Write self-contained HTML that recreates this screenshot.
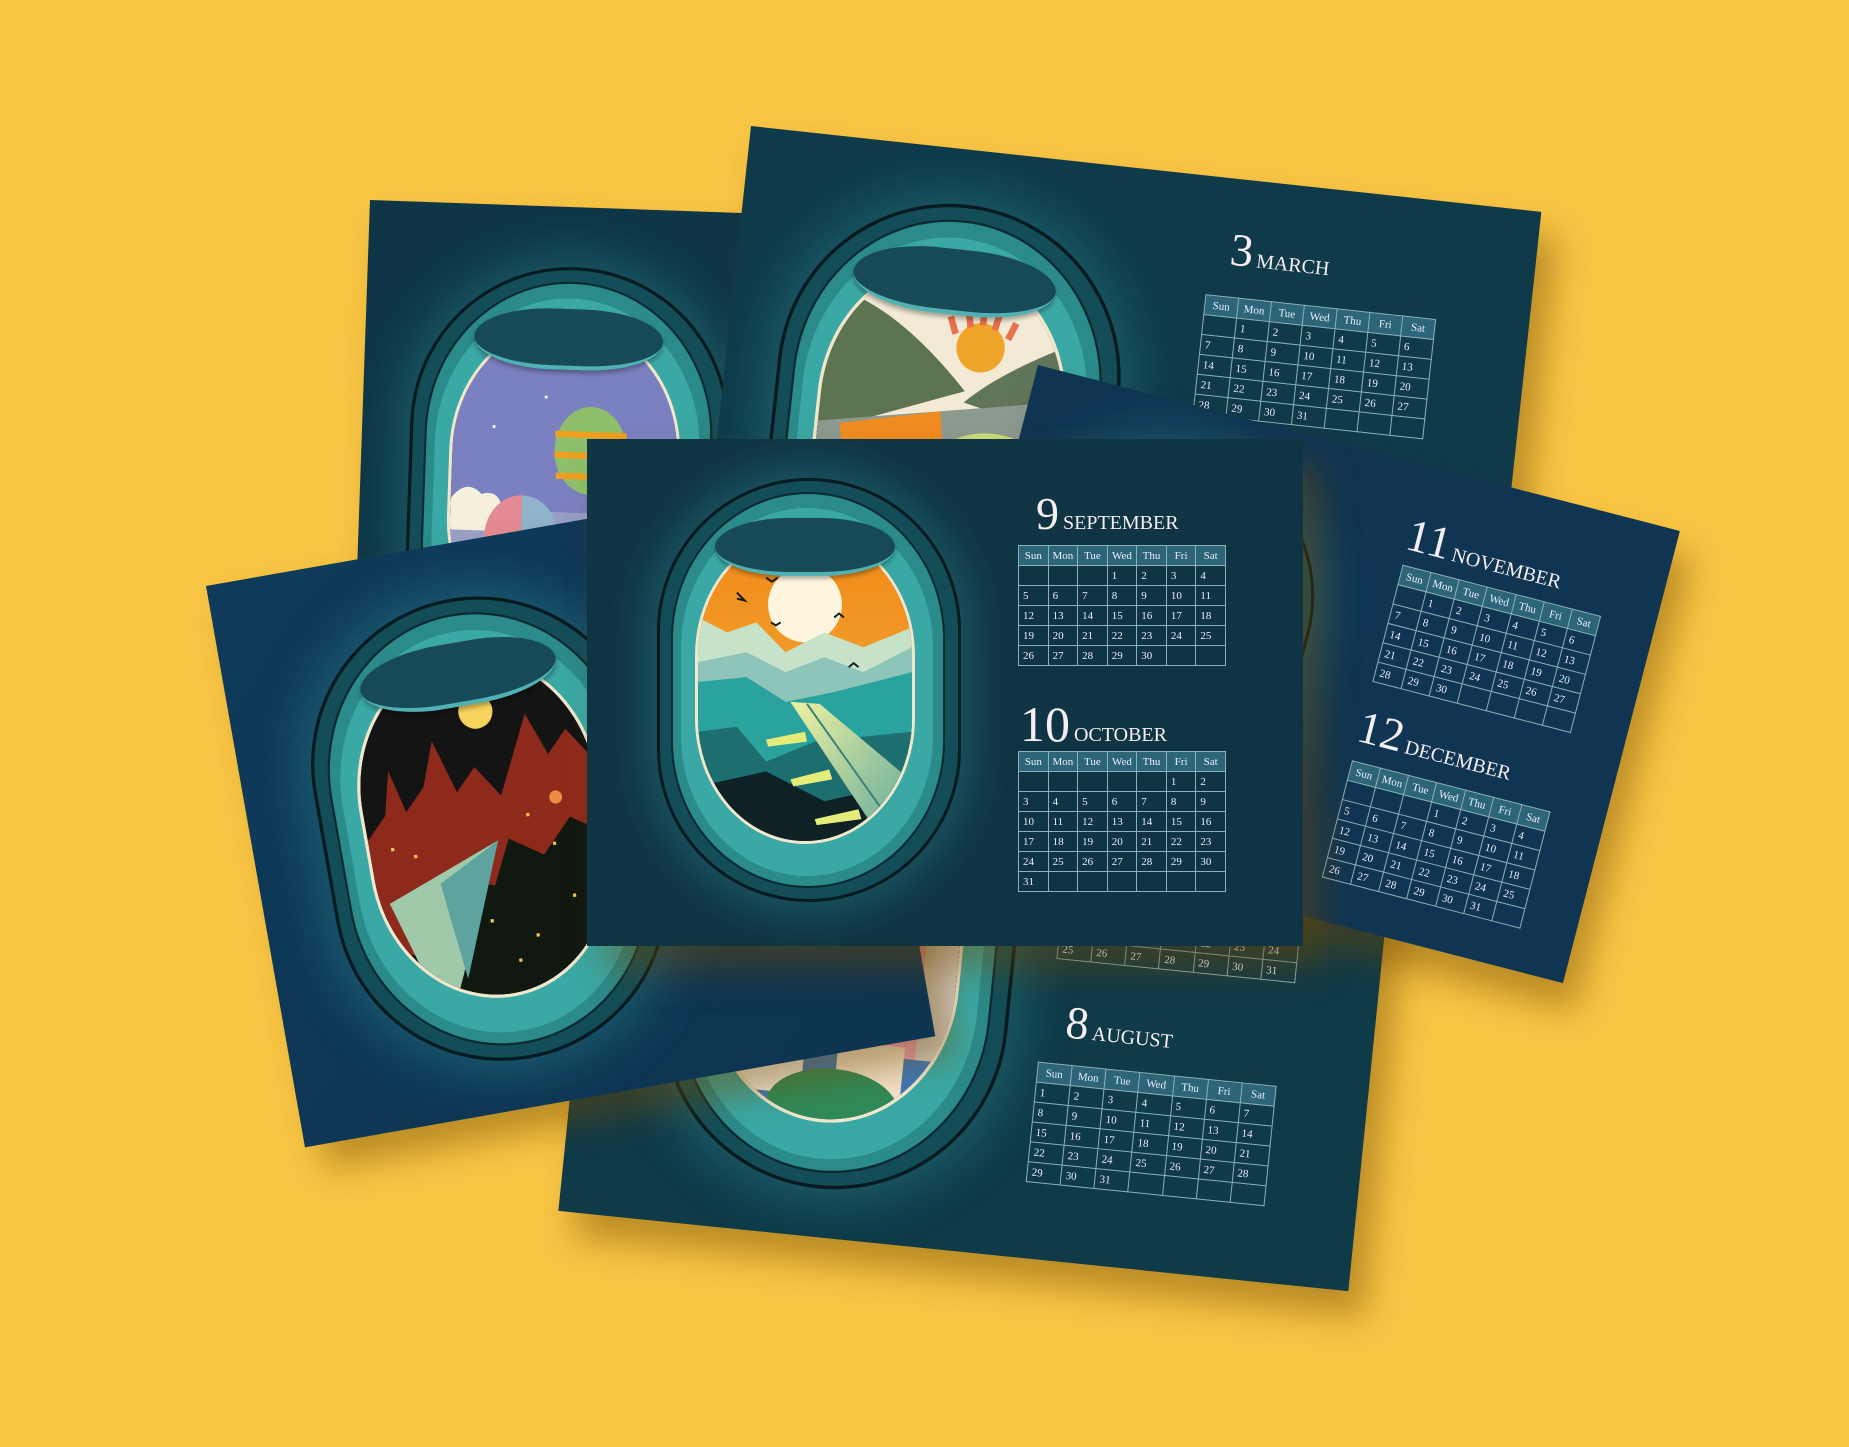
<!DOCTYPE html>
<html><head><meta charset="utf-8">
<style>
*{margin:0;padding:0;box-sizing:border-box}
html,body{width:1849px;height:1447px;overflow:hidden;background:#f9c544}
.card{position:absolute;overflow:hidden;box-shadow:18px 24px 34px rgba(110,70,0,.45)}
.win{position:absolute;width:304px;height:424px;transform-origin:0 0}
.w1{position:absolute;inset:0;border-radius:50%/36%;background:#134e58;border:3px solid #061a20;box-shadow:0 0 45px 12px rgba(60,180,180,.28)}
.w2{position:absolute;left:14px;right:16px;top:14px;bottom:14px;border-radius:50%/37%;background:#2b8a8a;border:2px solid #0b2a30}
.w3{position:absolute;left:24px;right:28px;top:30px;bottom:26px;border-radius:50%/38%;background:#3aa8a4}
.sc{position:absolute;left:38px;right:46px;top:52px;bottom:58px;border-radius:50%/40%;overflow:hidden;border:3px solid #f1e7cc;background:#222}
.sc svg{width:100%;height:100%;display:block}
.shade{position:absolute;left:58px;right:66px;top:40px;height:58px;border-radius:50%/60%;background:#174a56;border-bottom:4px solid #4fb1b3;box-shadow:0 3px 4px rgba(0,0,0,.3)}
.ttl{position:absolute;color:#f6eef0;font-family:"Liberation Serif",serif;white-space:nowrap;line-height:1}
.ttl b{font-weight:normal;font-size:46px}
.ttl span{font-size:20px;margin-left:4px}
table.cal{position:absolute;border-collapse:collapse;table-layout:fixed;font-family:"Liberation Serif",serif;color:#eef;font-size:11px}
table.cal td{border:1px solid #8fb0b7;height:20px;padding-left:4px;text-align:left}
table.cal tr:first-child td{background:#2c6577;text-align:center;padding:0}
</style></head><body>

<!-- balloon card -->
<div class="card" style="left:370px;top:200px;width:660px;height:560px;background:#0e3646;transform:rotate(2deg);transform-origin:0 0">
  <div class="win" style="left:48px;top:60px;transform:scale(1.05)">
    <div class="w1"></div><div class="w2"></div><div class="w3"></div>
    <div class="sc"><svg viewBox="0 0 220 310" preserveAspectRatio="none">
      <rect width="220" height="310" fill="#7b80c0"/><rect y="180" width="220" height="130" fill="#9aa0c8"/>
      <circle cx="40" cy="100" r="1.5" fill="#fff"/><circle cx="90" cy="70" r="1.5" fill="#fff"/><circle cx="180" cy="120" r="1.5" fill="#fff"/><circle cx="200" cy="150" r="1.5" fill="#fff"/>
      <path d="M0 170 q15-20 30-5 q15-5 20 10 l0 25 H0z" fill="#f4f0dc"/>
      <ellipse cx="135" cy="120" rx="35" ry="42" fill="#8fbf6a"/>
      <path d="M100 105 h70 M100 125 h70 M102 145 h66" stroke="#f0a020" stroke-width="6"/>
      <ellipse cx="70" cy="205" rx="36" ry="40" fill="#e48a94"/>
      <path d="M70 165 a36 40 0 0 1 0 80z" fill="#8fb4cc"/>
      <path d="M34 215 l72 0 l-10 10 l-10-10 l-10 10 l-10-10 l-10 10 l-10-10 l-10 10z" fill="#e6d070"/>
      <path d="M50 240 L62 275 h16 L90 240z" fill="#e48a94"/>
    </svg></div>
    <div class="shade"></div>
  </div>
</div>

<!-- March card -->
<div class="card" style="left:751px;top:126px;width:795px;height:560px;background:#0f3a4a;transform:rotate(6.2deg);transform-origin:0 0">
  <div class="win" style="left:52px;top:55px;transform:scale(1.13)">
    <div class="w1"></div><div class="w2"></div><div class="w3"></div>
    <div class="sc"><svg viewBox="0 0 220 310" preserveAspectRatio="none">
      <rect width="220" height="310" fill="#f3ead6"/>
      <circle cx="140" cy="70" r="22" fill="#f0a52a"/>
      <path d="M110 45 l6 15 M125 35 l4 18 M140 30 v20 M155 35 l-4 18 M170 45 l-6 15" stroke="#e8704a" stroke-width="6"/>
      <path d="M0 30 Q60 40 130 110 L0 160z" fill="#5d7450"/>
      <path d="M220 60 Q160 90 130 120 L220 140z" fill="#60755a"/>
      <path d="M0 150 L220 110 V310 H0z" fill="#8c9a90"/>
      <path d="M20 150 L110 130 L120 190 L30 205z" fill="#f08c20"/>
      <ellipse cx="160" cy="170" rx="45" ry="25" fill="#c9dc7a"/>
      <path d="M20 215 L100 200 L110 250 L20 270z" fill="#f1eab0"/>
      <path d="M120 210 L200 200 L200 250 L130 260z" fill="#f3ead0"/>
    </svg></div>
    <div class="shade"></div>
  </div>
  <div class="ttl" style="left:490px;top:48px"><b>3</b><span>MARCH</span></div>
  <table class="cal" style="left:470px;top:118px;width:232px">
    <tr><td>Sun</td><td>Mon</td><td>Tue</td><td>Wed</td><td>Thu</td><td>Fri</td><td>Sat</td></tr>
    <tr><td></td><td>1</td><td>2</td><td>3</td><td>4</td><td>5</td><td>6</td></tr>
    <tr><td>7</td><td>8</td><td>9</td><td>10</td><td>11</td><td>12</td><td>13</td></tr>
    <tr><td>14</td><td>15</td><td>16</td><td>17</td><td>18</td><td>19</td><td>20</td></tr>
    <tr><td>21</td><td>22</td><td>23</td><td>24</td><td>25</td><td>26</td><td>27</td></tr>
    <tr><td>28</td><td>29</td><td>30</td><td>31</td><td></td><td></td><td></td></tr>
  </table>
</div>

<!-- August card -->
<div class="card" style="left:619px;top:614px;width:794px;height:600px;background:#0f3a48;transform:rotate(5.8deg);transform-origin:0 0">
  <div class="win" style="left:82px;top:68px;transform:scale(1.14)">
    <div class="w1"></div><div class="w2"></div><div class="w3"></div>
    <div class="sc"><svg viewBox="0 0 220 310" preserveAspectRatio="none">
      <rect width="220" height="310" fill="#3f78b8"/>
      <rect x="0" y="120" width="40" height="120" fill="#f2efe6"/><rect x="40" y="150" width="45" height="110" fill="#d9bf58"/>
      <rect x="85" y="130" width="40" height="110" fill="#3a9a8c"/><rect x="120" y="110" width="40" height="130" fill="#e88a7a"/>
      <rect x="155" y="130" width="40" height="120" fill="#f0a0b8"/><rect x="190" y="100" width="30" height="150" fill="#d8d0c8"/>
      <rect x="20" y="230" width="70" height="60" fill="#f5f0e2"/><rect x="120" y="240" width="60" height="50" fill="#f3e3c9"/>
      <ellipse cx="120" cy="300" rx="60" ry="35" fill="#2f8a58"/>
      <ellipse cx="60" cy="170" rx="22" ry="20" fill="#d9bf58"/>
    </svg></div>
    <div class="shade"></div>
  </div>
  <table class="cal" style="left:470px;top:178px;width:240px">
    <tr><td>Sun</td><td>Mon</td><td>Tue</td><td>Wed</td><td>Thu</td><td>Fri</td><td>Sat</td></tr>
    <tr><td></td><td></td><td></td><td></td><td>1</td><td>2</td><td>3</td></tr>
    <tr><td>4</td><td>5</td><td>6</td><td>7</td><td>8</td><td>9</td><td>10</td></tr>
    <tr><td>11</td><td>12</td><td>13</td><td>14</td><td>15</td><td>16</td><td>17</td></tr>
    <tr><td>18</td><td>19</td><td>20</td><td>21</td><td>22</td><td>23</td><td>24</td></tr>
    <tr><td>25</td><td>26</td><td>27</td><td>28</td><td>29</td><td>30</td><td>31</td></tr>
  </table>
  <div class="ttl" style="left:486px;top:338px"><b>8</b><span>AUGUST</span></div>
  <table class="cal" style="left:462px;top:403px;width:240px">
    <tr><td>Sun</td><td>Mon</td><td>Tue</td><td>Wed</td><td>Thu</td><td>Fri</td><td>Sat</td></tr>
    <tr><td>1</td><td>2</td><td>3</td><td>4</td><td>5</td><td>6</td><td>7</td></tr>
    <tr><td>8</td><td>9</td><td>10</td><td>11</td><td>12</td><td>13</td><td>14</td></tr>
    <tr><td>15</td><td>16</td><td>17</td><td>18</td><td>19</td><td>20</td><td>21</td></tr>
    <tr><td>22</td><td>23</td><td>24</td><td>25</td><td>26</td><td>27</td><td>28</td></tr>
    <tr><td>29</td><td>30</td><td>31</td><td></td><td></td><td></td><td></td></tr>
  </table>
</div>

<!-- November card -->
<div class="card" style="left:1038px;top:365px;width:663px;height:467px;background:#0f3553;transform:rotate(14.5deg);transform-origin:0 0">
  <div class="win" style="left:26px;top:40px">
    <div class="w1"></div><div class="w2"></div><div class="w3"></div>
    <div class="sc"></div><div class="shade"></div>
  </div>
  <div class="ttl" style="left:400px;top:48px"><b>11</b><span>NOVEMBER</span></div>
  <table class="cal" style="left:403px;top:102px;width:205px">
    <tr><td>Sun</td><td>Mon</td><td>Tue</td><td>Wed</td><td>Thu</td><td>Fri</td><td>Sat</td></tr>
    <tr><td></td><td>1</td><td>2</td><td>3</td><td>4</td><td>5</td><td>6</td></tr>
    <tr><td>7</td><td>8</td><td>9</td><td>10</td><td>11</td><td>12</td><td>13</td></tr>
    <tr><td>14</td><td>15</td><td>16</td><td>17</td><td>18</td><td>19</td><td>20</td></tr>
    <tr><td>21</td><td>22</td><td>23</td><td>24</td><td>25</td><td>26</td><td>27</td></tr>
    <tr><td>28</td><td>29</td><td>30</td><td></td><td></td><td></td><td></td></tr>
  </table>
  <div class="ttl" style="left:401px;top:246px"><b>12</b><span>DECEMBER</span></div>
  <table class="cal" style="left:403px;top:304px;width:205px">
    <tr><td>Sun</td><td>Mon</td><td>Tue</td><td>Wed</td><td>Thu</td><td>Fri</td><td>Sat</td></tr>
    <tr><td></td><td></td><td></td><td>1</td><td>2</td><td>3</td><td>4</td></tr>
    <tr><td>5</td><td>6</td><td>7</td><td>8</td><td>9</td><td>10</td><td>11</td></tr>
    <tr><td>12</td><td>13</td><td>14</td><td>15</td><td>16</td><td>17</td><td>18</td></tr>
    <tr><td>19</td><td>20</td><td>21</td><td>22</td><td>23</td><td>24</td><td>25</td></tr>
    <tr><td>26</td><td>27</td><td>28</td><td>29</td><td>30</td><td>31</td><td></td></tr>
  </table>
</div>

<!-- night card -->
<div class="card" style="left:206px;top:586px;width:640px;height:570px;background:linear-gradient(135deg,#0f3a5a,#0d3450);transform:rotate(-10deg);transform-origin:0 0">
  <div class="win" style="left:70px;top:55px;transform:scale(1.1)">
    <div class="w1"></div><div class="w2"></div><div class="w3"></div>
    <div class="sc"><svg viewBox="0 0 220 310" preserveAspectRatio="none">
      <rect width="220" height="310" fill="#141414"/>
      <circle cx="120" cy="50" r="16" fill="#f7d35c"/>
      <path d="M0 150 L20 130 L30 90 L40 130 L60 110 L75 70 L90 120 L110 100 L130 130 L150 90 L165 60 L180 100 L200 80 L220 110 V260 H0z" fill="#8e2a1c"/>
      <circle cx="180" cy="140" r="6" fill="#f08a40"/>
      <path d="M60 250 L80 200 L110 210 L130 170 L160 190 L190 160 L220 180 V310 H60z" fill="#101810"/>
      <g fill="#f2c94c"><rect x="20" y="160" width="3" height="3"/><rect x="40" y="170" width="3" height="3"/><rect x="150" y="150" width="3" height="3"/><rect x="170" y="180" width="3" height="3"/><rect x="100" y="240" width="3" height="3"/><rect x="140" y="260" width="3" height="3"/><rect x="180" y="230" width="3" height="3"/><rect x="120" y="280" width="3" height="3"/><rect x="200" y="270" width="3" height="3"/></g>
      <path d="M10 210 L120 170 L60 300 L40 310z" fill="#9fc9a8"/>
      <path d="M60 200 L120 170 L70 290z" fill="#5fa3a0"/>
    </svg></div>
    <div class="shade"></div>
  </div>
</div>

<!-- center card -->
<div class="card" style="left:587px;top:439px;width:716px;height:507px;background:#0f3443">
  <div class="win" style="left:70px;top:39px">
    <div class="w1"></div><div class="w2"></div><div class="w3"></div>
    <div class="sc"><svg viewBox="0 0 220 310" preserveAspectRatio="none">
      <defs>
        <linearGradient id="sky" x1="0" y1="0" x2="0" y2="1"><stop offset="0" stop-color="#f08a18"/><stop offset="1" stop-color="#f5b040"/></linearGradient>
        <linearGradient id="wg" x1="0" y1="0" x2="1" y2="1"><stop offset="0" stop-color="#f0f2a0"/><stop offset="1" stop-color="#5aa79e"/></linearGradient>
      </defs>
      <rect width="220" height="310" fill="url(#sky)"/>
      <circle cx="110" cy="72" r="38" fill="#fdf5de"/>
      <path d="M0 85 L30 100 L60 90 L90 120 L130 100 L170 115 L220 95 V170 H0z" fill="#c6e2c8"/>
      <path d="M0 130 L50 120 L90 140 L130 125 L170 140 L220 115 V210 H0z" fill="#8fc4ba"/>
      <path d="M0 150 L50 145 L90 170 L140 160 L220 140 V260 H0z" fill="#2aa39f"/>
      <path d="M0 200 L40 195 L70 230 L120 210 L220 200 V310 H0z" fill="#1c6f6e"/>
      <path d="M0 255 L70 240 L130 270 L220 250 V310 H0z" fill="#0e2225"/>
      <path d="M95 170 L125 172 L220 250 L220 310 L190 310z" fill="url(#wg)"/>
      <path d="M112 172 L205 300" stroke="#3c7f7c" stroke-width="2"/>
      <path d="M70 208 L110 200 L112 210 L72 215z M95 248 L135 238 L138 248 L98 255z M120 288 L165 278 L168 288 L122 294z" fill="#e6ec7a"/>
      <path d="M40 60 l8 8 l-8 -2 M70 45 l6 4 l6-4 M75 90 l5 3 l5-3 M140 85 l5-4 l5 4 M155 135 l5-4 l5 4" stroke="#1a1a1a" stroke-width="2" fill="none"/>
    </svg></div>
    <div class="shade"></div>
  </div>
  <div class="ttl" style="left:433px;top:52px"><b style="margin-left:16px">9</b><span>SEPTEMBER</span></div>
  <table class="cal" style="left:431px;top:106px;width:208px">
    <tr><td>Sun</td><td>Mon</td><td>Tue</td><td>Wed</td><td>Thu</td><td>Fri</td><td>Sat</td></tr>
    <tr><td></td><td></td><td></td><td>1</td><td>2</td><td>3</td><td>4</td></tr>
    <tr><td>5</td><td>6</td><td>7</td><td>8</td><td>9</td><td>10</td><td>11</td></tr>
    <tr><td>12</td><td>13</td><td>14</td><td>15</td><td>16</td><td>17</td><td>18</td></tr>
    <tr><td>19</td><td>20</td><td>21</td><td>22</td><td>23</td><td>24</td><td>25</td></tr>
    <tr><td>26</td><td>27</td><td>28</td><td>29</td><td>30</td><td></td><td></td></tr>
  </table>
  <div class="ttl" style="left:433px;top:260px"><b style="font-size:50px">10</b><span>OCTOBER</span></div>
  <table class="cal" style="left:431px;top:312px;width:208px">
    <tr><td>Sun</td><td>Mon</td><td>Tue</td><td>Wed</td><td>Thu</td><td>Fri</td><td>Sat</td></tr>
    <tr><td></td><td></td><td></td><td></td><td></td><td>1</td><td>2</td></tr>
    <tr><td>3</td><td>4</td><td>5</td><td>6</td><td>7</td><td>8</td><td>9</td></tr>
    <tr><td>10</td><td>11</td><td>12</td><td>13</td><td>14</td><td>15</td><td>16</td></tr>
    <tr><td>17</td><td>18</td><td>19</td><td>20</td><td>21</td><td>22</td><td>23</td></tr>
    <tr><td>24</td><td>25</td><td>26</td><td>27</td><td>28</td><td>29</td><td>30</td></tr>
    <tr><td>31</td><td></td><td></td><td></td><td></td><td></td><td></td></tr>
  </table>
</div>

</body></html>
